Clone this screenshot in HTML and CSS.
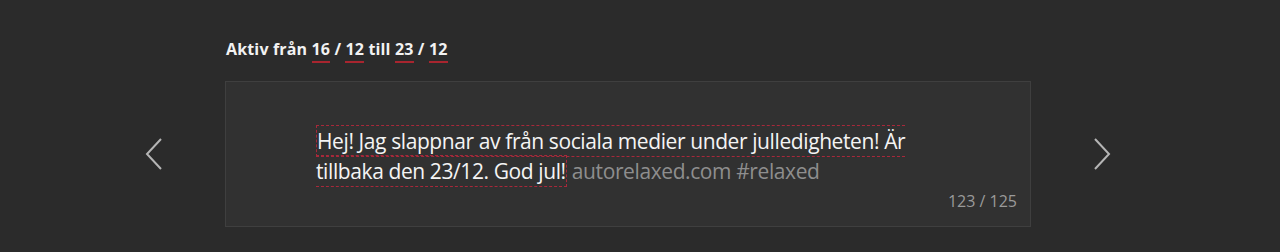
FILE: index.html
```html
<!DOCTYPE html>
<html>
<head>
    <meta name="viewport" content="width=device-width, initial-scale=1">
    <link rel="stylesheet" href="styles.css">
</head>

<body>
    <div class="wrapper">
        <h3 class="period">Aktiv från <span class="num">16</span> / <span class="num">12</span> till <span class="num">23</span> / <span class="num">12</span></h3>

        <div class="slider">
            <div class="arrow">
                <svg width="18" height="32" viewBox="0 0 18 32"><polyline points="16,1 2,16 16,31" fill="none" stroke="#b5b5b5" stroke-width="2"/></svg>
            </div>

            <div class="message">
                <p class="text"><span class="editable">Hej! Jag slappnar av från sociala medier under julledigheten! Är tillbaka den 23/12. God jul!</span> <span class="tags">autorelaxed.com #relaxed</span></p>
                <div class="counter">123 / 125</div>
            </div>

            <div class="arrow">
                <svg width="18" height="32" viewBox="0 0 18 32"><polyline points="2,1 16,16 2,31" fill="none" stroke="#b5b5b5" stroke-width="2"/></svg>
            </div>
        </div>
    </div>
</body>
</html>
```

FILE: styles.css
```css
body {
    margin: 0;
    background-color: #2b2b2b;
    font-family: "Open Sans", "DejaVu Sans", sans-serif;
}

.wrapper {
    padding: 36px 0 0 136px;
}

.period {
    margin: 0 0 19px 90px;
    color: #f2f2f2;
    font-size: 16px;
    font-weight: 700;
    letter-spacing: 0.15px;
    line-height: 26px;
}

.num {
    border-bottom: 2px solid #a8252f;
    padding-bottom: 1px;
}

.slider {
    display: grid;
    grid-template-columns: 36px 806px 36px;
    column-gap: 53px;
    align-items: center;
}

.arrow {
    display: flex;
    justify-content: center;
}

/* Поле сообщения */
.message {
    box-sizing: border-box;
    height: 146px;
    background-color: #313131;
    border: 1px solid #3f3f3f;
    padding: 44px 13px 0 90px;
}

.text {
    margin: 0;
    width: 610px;
    font-size: 21px;
    line-height: 30px;
    letter-spacing: -0.4px;
    color: #f4f4f4;
}

.editable {
    border: 1px dashed #a8283a;
    padding: 1px 0;
}

.tags {
    color: #8e8e8e;
}

.counter {
    margin-top: 4px;
    text-align: right;
    font-size: 16px;
    color: #9a9a9a;
}
```
